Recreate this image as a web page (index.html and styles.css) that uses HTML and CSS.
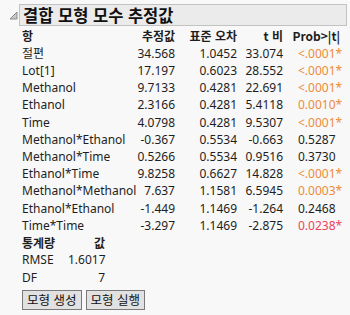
FILE: index.html
```html
<!DOCTYPE html>
<html lang="ko">
<head>
<meta charset="utf-8">
<title>결합 모형 모수 추정값</title>
<link rel="stylesheet" href="styles.css">
</head>
<body>
<div class="report">
  <div class="outline-head">
    <svg class="disclosure" width="9" height="9" viewBox="0 0 9 9"><polygon points="1,8 8,8 8,1" fill="#c9c9c9" stroke="#8a8a8a" stroke-width="1" stroke-linejoin="miter"/></svg>
    <div class="title-box">결합 모형 모수 추정값</div>
  </div>
  <div class="outline-body">
    <table class="est">
      <colgroup><col class="c1"><col class="c2"><col class="c3"><col class="c4"><col class="c5"></colgroup>
      <thead>
        <tr><th class="l">항</th><th>추정값</th><th>표준 오차</th><th>t 비</th><th>Prob&gt;|t|</th></tr>
      </thead>
      <tbody>
        <tr><td class="l">절편</td><td>34.568</td><td>1.0452</td><td>33.074</td><td class="p sig">&lt;.0001*</td></tr>
        <tr><td class="l">Lot[1]</td><td>17.197</td><td>0.6023</td><td>28.552</td><td class="p sig">&lt;.0001*</td></tr>
        <tr><td class="l">Methanol</td><td>9.7133</td><td>0.4281</td><td>22.691</td><td class="p sig">&lt;.0001*</td></tr>
        <tr><td class="l">Ethanol</td><td>2.3166</td><td>0.4281</td><td>5.4118</td><td class="p sig">0.0010*</td></tr>
        <tr><td class="l">Time</td><td>4.0798</td><td>0.4281</td><td>9.5307</td><td class="p sig">&lt;.0001*</td></tr>
        <tr><td class="l">Methanol*Ethanol</td><td>-0.367</td><td>0.5534</td><td>-0.663</td><td class="p">0.5287</td></tr>
        <tr><td class="l">Methanol*Time</td><td>0.5266</td><td>0.5534</td><td>0.9516</td><td class="p">0.3730</td></tr>
        <tr><td class="l">Ethanol*Time</td><td>9.8258</td><td>0.6627</td><td>14.828</td><td class="p sig">&lt;.0001*</td></tr>
        <tr><td class="l">Methanol*Methanol</td><td>7.637</td><td>1.1581</td><td>6.5945</td><td class="p sig">0.0003*</td></tr>
        <tr><td class="l">Ethanol*Ethanol</td><td>-1.449</td><td>1.1469</td><td>-1.264</td><td class="p">0.2468</td></tr>
        <tr><td class="l">Time*Time</td><td>-3.297</td><td>1.1469</td><td>-2.875</td><td class="p sig5">0.0238*</td></tr>
      </tbody>
    </table>
    <table class="stats">
      <colgroup><col class="s1"><col class="s2"></colgroup>
      <thead><tr><th class="l">통계량</th><th>값</th></tr></thead>
      <tbody>
        <tr><td class="l">RMSE</td><td>1.6017</td></tr>
        <tr><td class="l">DF</td><td>7</td></tr>
      </tbody>
    </table>
    <div class="buttons">
      <button class="btn" type="button">모형 생성</button>
      <button class="btn" type="button">모형 실행</button>
    </div>
  </div>
</div>
</body>
</html>
```

FILE: styles.css
```css
html, body {
  margin: 0;
  padding: 0;
  background: #f8f8f8;
}
body {
  font-family: "Noto Sans", "Noto Sans CJK KR", sans-serif;
  font-size: 12px;
  color: #1e1e1e;
}
.report {
  padding-top: 4px;
}
.outline-head {
  display: flex;
  align-items: flex-start;
  padding-left: 9px;
}
.disclosure {
  margin-top: 7px;
  margin-right: 1px;
  flex: none;
}
.title-box {
  width: 323px;
  height: 20px;
  box-sizing: content-box;
  background: #ebebeb;
  border: 1px solid #c2c2c2;
  font-family: "Noto Sans CJK KR", sans-serif;
  font-weight: 700;
  font-size: 16.5px;
  line-height: 20px;
  padding-left: 3px;
  color: #111;
  white-space: nowrap;
}
.outline-body {
  padding-left: 22px;
}
table {
  border-collapse: collapse;
  table-layout: fixed;
}
th, td {
  padding: 0;
  text-align: right;
  white-space: nowrap;
}
th {
  font-family: "Noto Sans CJK KR", "Noto Sans", sans-serif;
  font-weight: 700;
}
.l { text-align: left; }
.est { width: 318px; }
.est col.c1 { width: 110px; }
.est col.c2 { width: 43px; }
.est col.c3 { width: 62px; }
.est col.c4 { width: 46px; }
.est col.c5 { width: 57px; }
.est thead tr { height: 18px; }
.est tbody tr { height: 17.2px; }
.est td.p {
  text-align: left;
  padding-left: 15px;
}
.sig { color: #ee8a3a; }
.sig5 { color: #e8455c; }
.stats { width: 83px; }
.stats col.s1 { width: 46px; }
.stats col.s2 { width: 37px; }
.stats tr { height: 17.4px; }
.buttons {
  display: flex;
  gap: 4px;
  margin-top: 4px;
}
.btn {
  font-family: "Noto Sans CJK KR", sans-serif;
  font-size: 12.5px;
  line-height: 18px;
  height: 20px;
  padding: 0 4px;
  margin: 0;
  background: #e1e1e1;
  border: 1px solid #7a7a7a;
  border-radius: 0;
  color: #111;
}
```
